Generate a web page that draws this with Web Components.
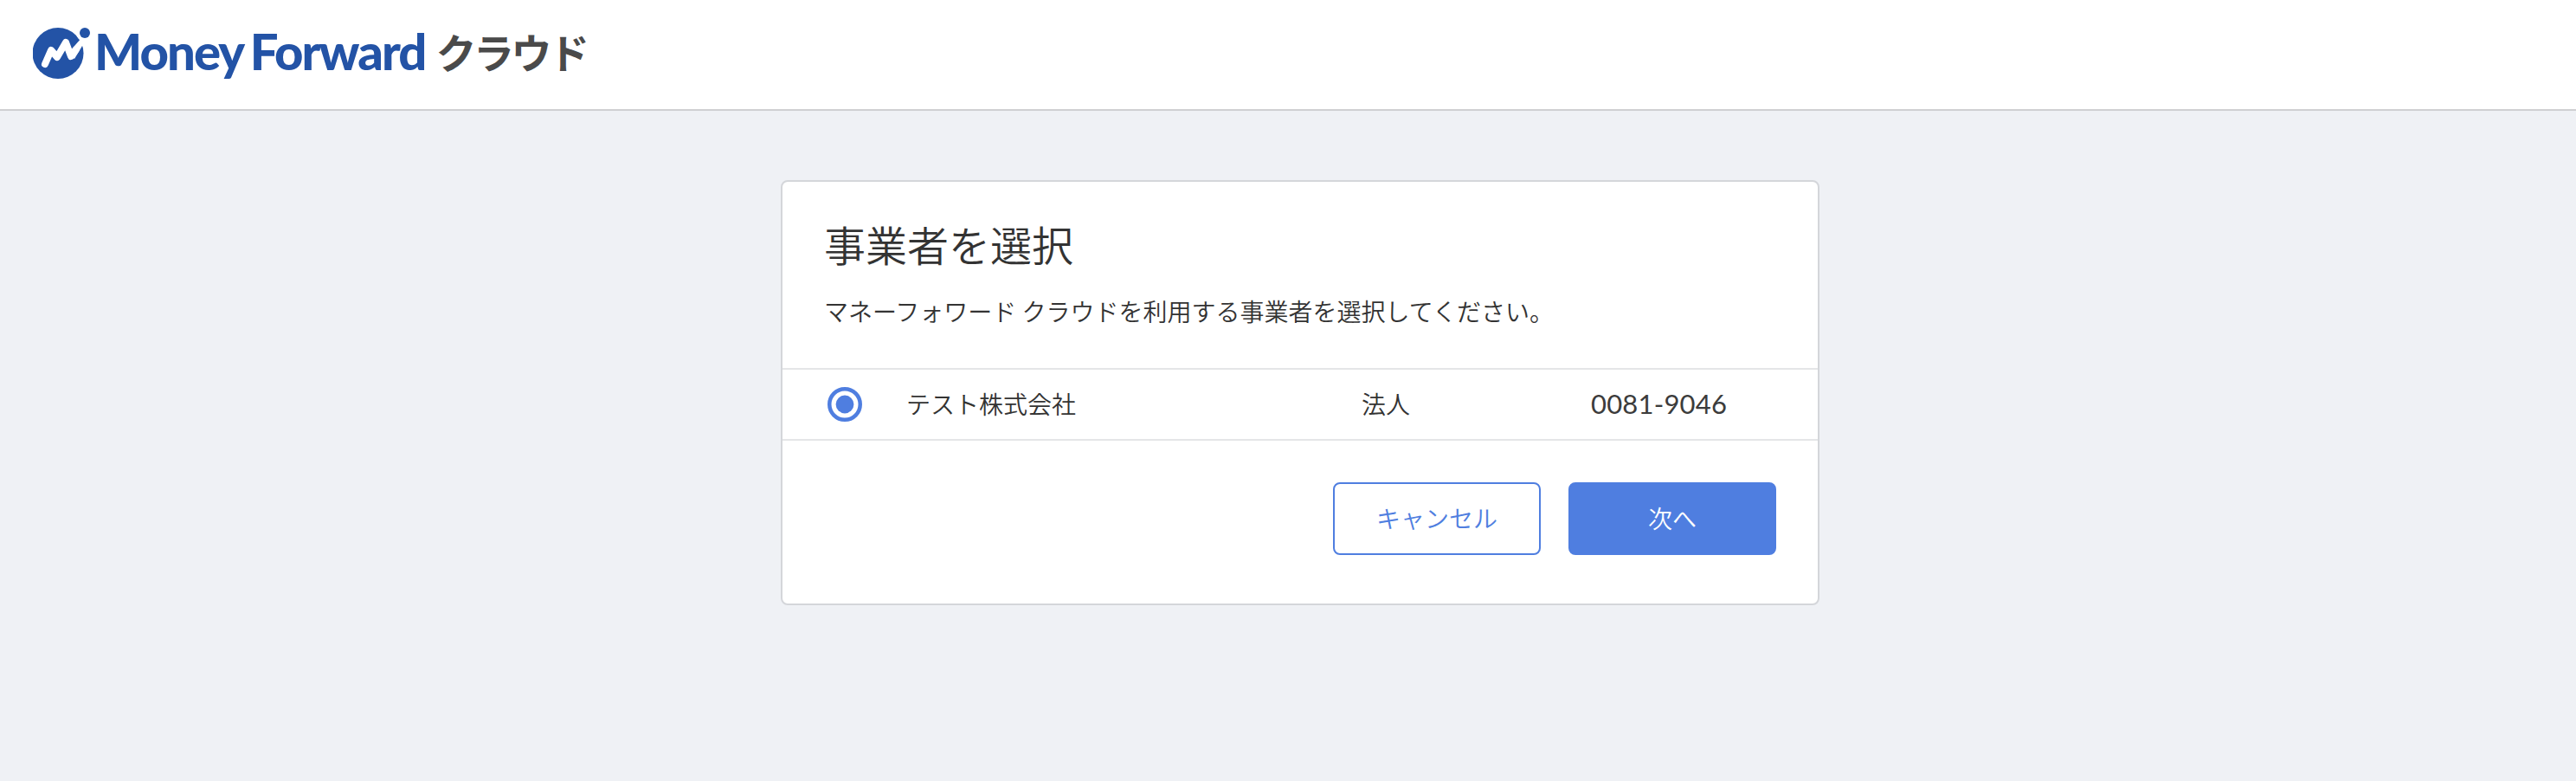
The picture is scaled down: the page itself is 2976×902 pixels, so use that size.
<!DOCTYPE html>
<html lang="ja">
<head>
<meta charset="utf-8">
<title>事業者を選択</title>
<style>
  html, body { margin: 0; height: 100%; }
  body { background: #eff1f5; font-family: "Noto Sans CJK JP", sans-serif; color: #333; }
</style>
</head>
<body>
<mf-header></mf-header>
<mf-main>
  <office-card heading="事業者を選択" lead="マネーフォワード クラウドを利用する事業者を選択してください。">
    <office-row name="テスト株式会社" kind="法人" code="0081-9046"></office-row>
    <mf-button slot="actions">キャンセル</mf-button>
    <mf-button slot="actions" primary>次へ</mf-button>
  </office-card>
</mf-main>
<script>
class MfHeader extends HTMLElement {
  constructor() {
    super();
    this.attachShadow({ mode: 'open' });
    this.shadowRoot.innerHTML = `
      <style>
        :host { display: flex; align-items: flex-start; height: 126px; background: #fff; border-bottom: 2px solid #cfd0d2; padding-left: 38px; }
        svg { display: block; margin-top: 28px; flex: none; }
        .brand { font: 900 58px/1 Lato, sans-serif; color: #2353a6; margin: 30px 0 0 4px; letter-spacing: -1.9px; word-spacing: -3px; white-space: nowrap; }
        .cloud { font: 700 47px/1 "Noto Sans CJK JP", sans-serif; color: #4a4a4a; margin: 35px 0 0 12px; letter-spacing: -3.5px; white-space: nowrap; }
      </style>
      <svg width="67" height="66" viewBox="0 0 67 66">
        <circle cx="29" cy="33.5" r="29.5" fill="#2353a6"/>
        <circle cx="60" cy="10" r="10" fill="#fff"/>
        <circle cx="60" cy="10" r="6" fill="#2353a6"/>
        <path d="M14 46 L21 30 L28 38 L38 21 L44 37 L50 29" fill="none" stroke="#fff" stroke-width="8" stroke-linecap="round" stroke-linejoin="round"/>
        <path d="M41 33 L56 16 L60 20 L48 40 Z" fill="#fff"/>
      </svg>
      <span class="brand">Money Forward</span>
      <span class="cloud">クラウド</span>
    `;
  }
}

class MfMain extends HTMLElement {
  constructor() {
    super();
    this.attachShadow({ mode: 'open' });
    this.shadowRoot.innerHTML = `
      <style>
        :host { display: block; padding: 80px 0 0 902px; height: 694px; }
      </style>
      <slot></slot>
    `;
  }
}

class OfficeCard extends HTMLElement {
  constructor() {
    super();
    this.attachShadow({ mode: 'open' });
  }

  connectedCallback() {
    this.shadowRoot.innerHTML = `
      <style>
        :host { display: block; box-sizing: border-box; width: 1200px; height: 491px; background: #fff; border: 2px solid #d4d6da; border-radius: 8px; }
        h1 { font-size: 48px; font-weight: 350; line-height: 72px; margin: 0; padding: 35px 48px 0; color: #333; }
        p { font-size: 28px; font-weight: 350; line-height: 42px; margin: 0; padding: 21px 48px 45px; color: #333; white-space: nowrap; }
        .actions { display: flex; justify-content: flex-end; gap: 32px; padding: 48px 48px 0; }
      </style>
      <h1>${this.getAttribute('heading')}</h1>
      <p>${this.getAttribute('lead')}</p>
      <slot></slot>
      <div class="actions"><slot name="actions"></slot></div>
    `;
  }
}

class OfficeRow extends HTMLElement {
  constructor() {
    super();
    this.attachShadow({ mode: 'open' });
  }

  connectedCallback() {
    this.shadowRoot.innerHTML = `
      <style>
        :host { display: grid; grid-template-columns: 143px 526px 265px 1fr; align-items: center; height: 80px; border-top: 2px solid #e4e5e7; border-bottom: 2px solid #e4e5e7; font-size: 28px; font-weight: 350; color: #333; }
        svg { display: block; margin-left: 52px; }
        .cell { padding-bottom: 3px; }
        .code { font-family: Lato, sans-serif; font-size: 31px; font-weight: 400; letter-spacing: 0.2px; color: #3c3c3c; }
      </style>
      <svg width="40" height="40" viewBox="0 0 40 40">
        <circle cx="20" cy="20" r="17.75" fill="none" stroke="#4f7ee0" stroke-width="4.5"/>
        <circle cx="20" cy="20" r="10.4" fill="#4f7ee0"/>
      </svg>
      <span class="cell">${this.getAttribute('name')}</span>
      <span class="cell">${this.getAttribute('kind')}</span>
      <span class="cell code">${this.getAttribute('code')}</span>
    `;
  }
}

class MfButton extends HTMLElement {
  constructor() {
    super();
    this.attachShadow({ mode: 'open' });
    this.shadowRoot.innerHTML = `
      <style>
        :host { display: flex; align-items: center; justify-content: center; box-sizing: border-box; width: 240px; height: 84px; padding-bottom: 2px; border: 2px solid #4f7ee0; border-radius: 8px; background: #fff; color: #4f7ee0; font-size: 28px; font-weight: 350; }
        :host([primary]) { background: #4f7ee0; color: #fff; }
      </style>
      <slot></slot>
    `;
  }
}

customElements.define('mf-header', MfHeader);
customElements.define('mf-main', MfMain);
customElements.define('office-card', OfficeCard);
customElements.define('office-row', OfficeRow);
customElements.define('mf-button', MfButton);
</script>
</body>
</html>
